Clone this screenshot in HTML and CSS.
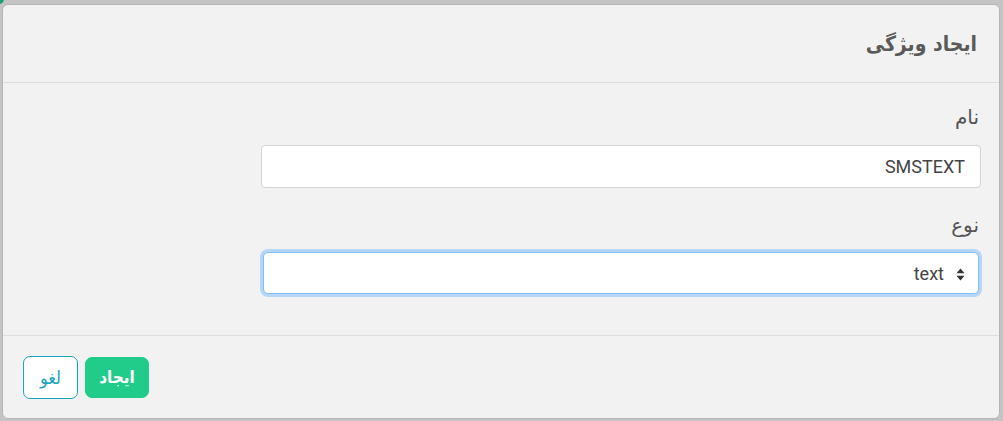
FILE: index.html
```html
<!DOCTYPE html>
<html lang="fa" dir="rtl">
<head>
<meta charset="utf-8">
<title>ایجاد ویژگی</title>
<link rel="stylesheet" href="styles.css">
</head>
<body>
<div class="backdrop-dot"></div>
<div class="modal">
  <div class="modal-header">
    <h5 class="modal-title">ایجاد ویژگی</h5>
  </div>
  <div class="modal-body">
    <div class="form-col">
      <div class="form-group">
        <label class="form-label">نام</label>
        <input class="form-control" type="text" value="SMSTEXT" dir="ltr">
      </div>
      <div class="form-group">
        <label class="form-label">نوع</label>
        <div class="select focused">
          <svg class="select-arrows" width="9" height="13" viewBox="0 0 9 13"><path d="M4.5 0.5 L8.5 5.2 H0.5 Z M0.5 7.8 H8.5 L4.5 12.5 Z" fill="#333"/></svg>
          <span class="select-value">text</span>
        </div>
      </div>
    </div>
  </div>
  <div class="modal-footer">
    <button class="btn btn-success">ایجاد</button>
    <button class="btn btn-outline">لغو</button>
  </div>
</div>
</body>
</html>
```

FILE: styles.css
```css
* { box-sizing: border-box; }
html, body { margin: 0; padding: 0; }
body {
  background: #c4c4c4;
  width: 1003px;
  height: 421px;
  overflow: hidden;
  font-family: "DejaVu Sans", Roboto, sans-serif;
  position: relative;
}
.backdrop-dot {
  position: absolute;
  left: -6px;
  top: -6px;
  width: 10px;
  height: 10px;
  border-radius: 50%;
  background: #1a9e73;
}
.modal {
  position: relative;
  margin: 4px 3px 2px 2px;
  height: 415px;
  background: #f2f2f2;
  border: 1px solid #b5b5b5;
  border-radius: 6px;
  display: flex;
  flex-direction: column;
}
.modal-header {
  height: 78px;
  padding: 0 22px;
  display: flex;
  align-items: center;
  border-bottom: 1px solid #dcdce2;
}
.modal-title {
  margin: 0;
  font-family: "DejaVu Sans Condensed", "DejaVu Sans", sans-serif;
  font-weight: bold;
  font-size: 21px;
  color: #5a5a5a;
  line-height: 30px;
}
.modal-body {
  height: 253px;
  padding: 21px 18px 0 20px;
  border-bottom: 1px solid #dcdce2;
}
.form-col {
  width: 720px;
}
.form-group {
  margin-bottom: 24px;
}
.form-label {
  display: block;
  padding-right: 2px;
  font-size: 20px;
  line-height: 26px;
  color: #555;
  margin-bottom: 15px;
}
.form-group + .form-group .form-label {
  margin-bottom: 14px;
}
.form-control {
  display: block;
  width: 720px;
  height: 43px;
  padding: 0 15px;
  background: #fff;
  border: 1px solid #d3d3d8;
  border-radius: 4px;
  font-family: Roboto, sans-serif;
  font-size: 18px;
  color: #444;
  text-align: right;
  outline: none;
}
.select {
  display: flex;
  align-items: center;
  gap: 12px;
  width: 716px;
  margin-right: 2px;
  height: 42px;
  padding: 0 13px;
  background: #fff;
  border: 1px solid #86bdf2;
  border-radius: 5px;
  box-shadow: 0 0 0 3px #b6d6f6;
}
.select-value {
  font-family: Roboto, sans-serif;
  font-size: 18px;
  color: #444;
}
.select-arrows { flex: none; margin-top: 2px; }
.modal-footer {
  flex: 1;
  display: flex;
  align-items: center;
  justify-content: flex-end;
  gap: 7px;
  padding: 0 20px;
}
.btn {
  font-family: "DejaVu Sans Condensed", "DejaVu Sans", sans-serif;
  border-radius: 7px;
  cursor: pointer;
  padding: 0;
}
.btn-success {
  height: 41px;
  width: 64px;
  background: #21cc8a;
  border: 1px solid #21cc8a;
  color: #fff;
  font-weight: bold;
  font-size: 17px;
}
.btn-outline {
  height: 43px;
  width: 55px;
  background: #fff;
  border: 1px solid #1aa5bb;
  color: #1aa5bb;
  font-size: 18px;
}
```
